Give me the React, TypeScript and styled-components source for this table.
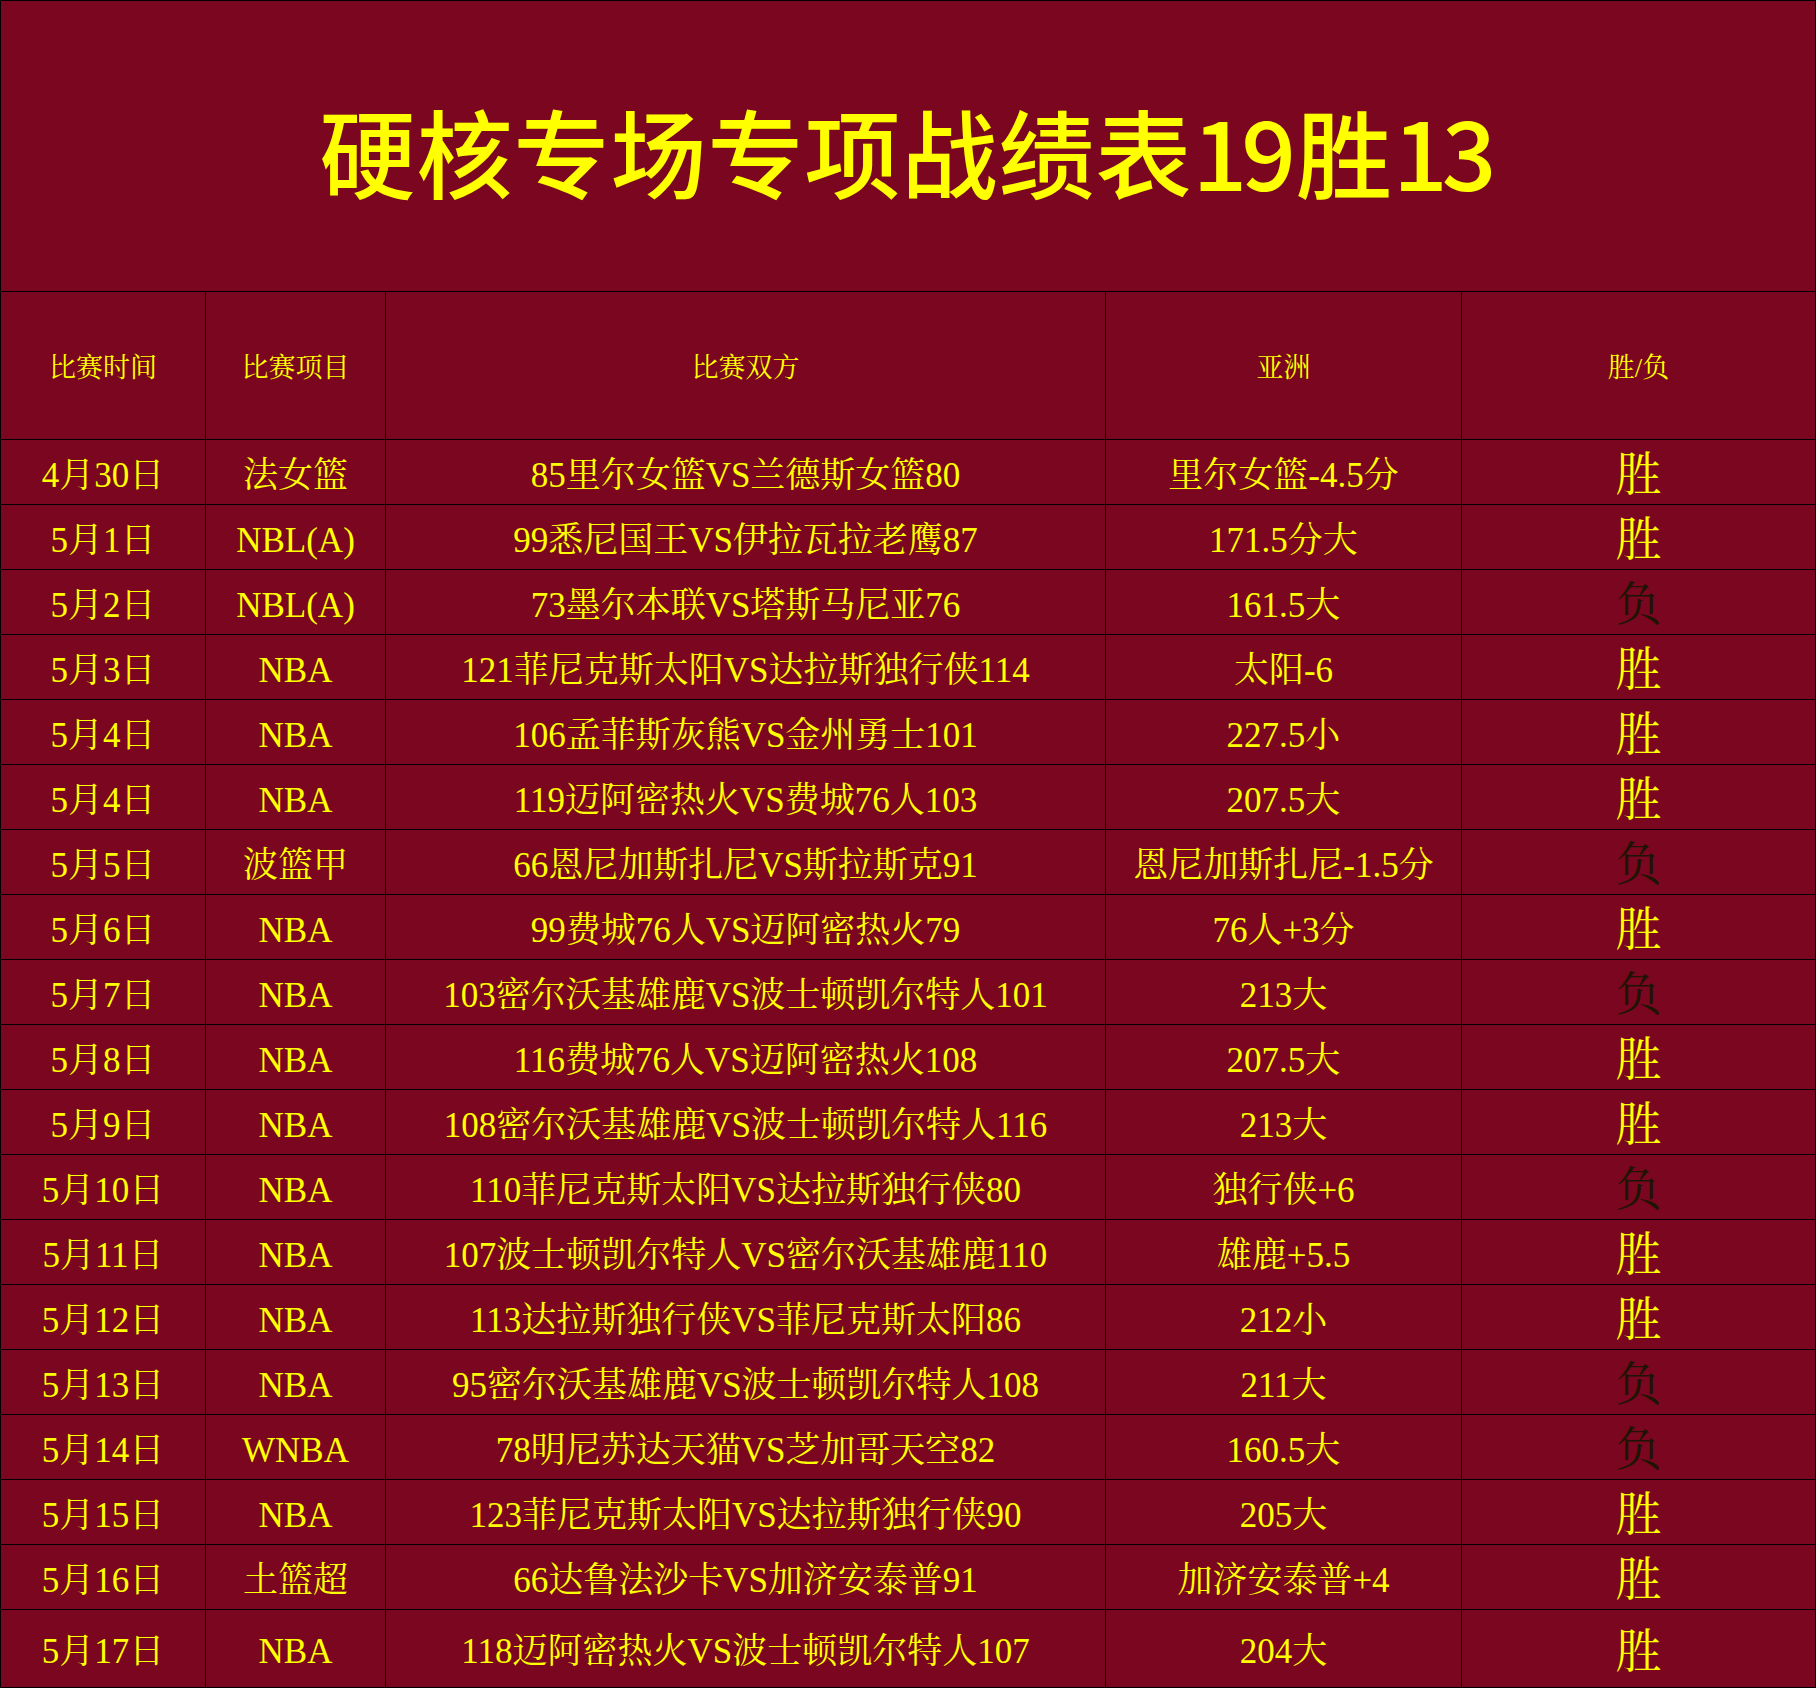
import styled, { createGlobalStyle } from "styled-components";

type Row = [string, string, string, string, boolean];

const ROWS: Row[] = [
  ["4月30日", "法女篮", "85里尔女篮VS兰德斯女篮80", "里尔女篮-4.5分", true],
  ["5月1日", "NBL(A)", "99悉尼国王VS伊拉瓦拉老鹰87", "171.5分大", true],
  ["5月2日", "NBL(A)", "73墨尔本联VS塔斯马尼亚76", "161.5大", false],
  ["5月3日", "NBA", "121菲尼克斯太阳VS达拉斯独行侠114", "太阳-6", true],
  ["5月4日", "NBA", "106孟菲斯灰熊VS金州勇士101", "227.5小", true],
  ["5月4日", "NBA", "119迈阿密热火VS费城76人103", "207.5大", true],
  ["5月5日", "波篮甲", "66恩尼加斯扎尼VS斯拉斯克91", "恩尼加斯扎尼-1.5分", false],
  ["5月6日", "NBA", "99费城76人VS迈阿密热火79", "76人+3分", true],
  ["5月7日", "NBA", "103密尔沃基雄鹿VS波士顿凯尔特人101", "213大", false],
  ["5月8日", "NBA", "116费城76人VS迈阿密热火108", "207.5大", true],
  ["5月9日", "NBA", "108密尔沃基雄鹿VS波士顿凯尔特人116", "213大", true],
  ["5月10日", "NBA", "110菲尼克斯太阳VS达拉斯独行侠80", "独行侠+6", false],
  ["5月11日", "NBA", "107波士顿凯尔特人VS密尔沃基雄鹿110", "雄鹿+5.5", true],
  ["5月12日", "NBA", "113达拉斯独行侠VS菲尼克斯太阳86", "212小", true],
  ["5月13日", "NBA", "95密尔沃基雄鹿VS波士顿凯尔特人108", "211大", false],
  ["5月14日", "WNBA", "78明尼苏达天猫VS芝加哥天空82", "160.5大", false],
  ["5月15日", "NBA", "123菲尼克斯太阳VS达拉斯独行侠90", "205大", true],
  ["5月16日", "土篮超", "66达鲁法沙卡VS加济安泰普91", "加济安泰普+4", true],
  ["5月17日", "NBA", "118迈阿密热火VS波士顿凯尔特人107", "204大", true],
];

const HEADERS = ["比赛时间", "比赛项目", "比赛双方", "亚洲", "胜/负"];

const App = () => {
  return (
    <>
      <GlobalStyle />
      <Sheet>
        <Title>
          硬核专场专项战绩表<Num>19</Num>胜<Num>13</Num>
        </Title>
        {HEADERS.map((h) => (
          <Cell key={h} $size={27}>
            {h}
          </Cell>
        ))}
        {ROWS.map(([date, league, match, handicap, win], i) => [
          <Cell key={`d${i}`}>{date}</Cell>,
          <Cell key={`l${i}`}>{league}</Cell>,
          <Cell key={`m${i}`}>{match}</Cell>,
          <Cell key={`h${i}`}>{handicap}</Cell>,
          <Cell key={`r${i}`} $size={46} $loss={!win}>
            {win ? "胜" : "负"}
          </Cell>,
        ])}
      </Sheet>
    </>
  );
};

export default App;

const GlobalStyle = createGlobalStyle`
  html, body {
    margin: 0;
    padding: 0;
    background: #fff;
  }
`;

const Sheet = styled.div`
  width: 1816px;
  height: 1688px;
  box-sizing: border-box;
  display: grid;
  grid-template-columns: 204px 179px 719px 355px 353px;
  grid-template-rows: 290px 147px repeat(18, 64px) 77px;
  gap: 1px;
  padding: 1px;
  background: #000;
`;

const Title = styled.div`
  grid-column: 1 / -1;
  display: flex;
  align-items: center;
  justify-content: center;
  padding-top: 8px;
  box-sizing: border-box;
  background: #7a0620;
  color: #ffff00;
  font-family: "Noto Sans CJK SC", "Noto Sans", sans-serif;
  font-weight: 500;
  font-size: 96px;
  letter-spacing: 1px;
  line-height: 1;
  white-space: nowrap;
`;

const Num = styled.span`
  letter-spacing: -6px;
  margin-right: 6px;
`;

const Cell = styled.div<{ $size?: number; $loss?: boolean }>`
  display: flex;
  align-items: center;
  justify-content: center;
  background: #7a0620;
  color: ${(p) => (p.$loss ? "#1e1404" : "#ffff00")};
  font-family: "Liberation Serif", "Noto Serif CJK SC", "Noto Sans CJK SC", serif;
  font-size: ${(p) => p.$size ?? 35}px;
  line-height: 1;
  white-space: nowrap;
  padding-top: 6px;
  box-sizing: border-box;
`;
